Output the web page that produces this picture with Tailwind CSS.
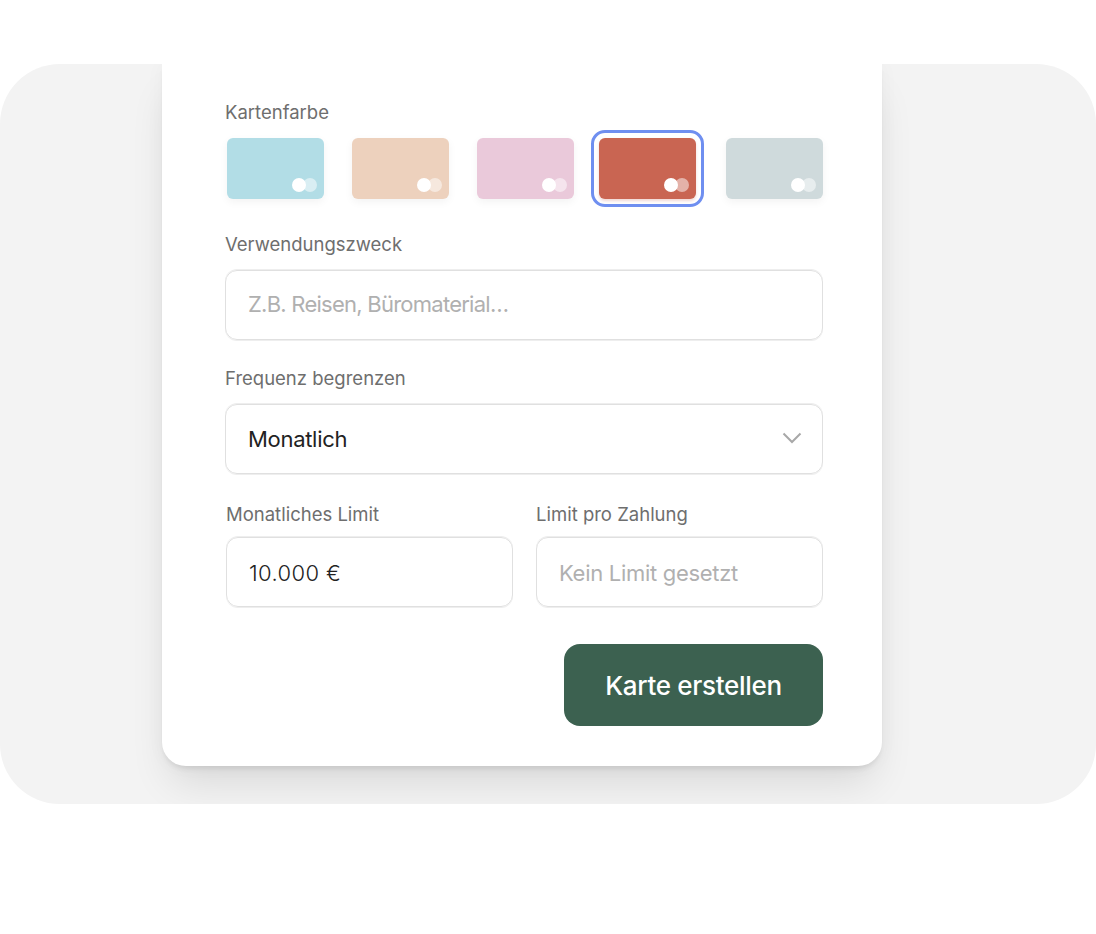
<!DOCTYPE html>
<html lang="de">

<head>
    <meta charset="UTF-8" />
    <title>Karte erstellen</title>
    <script src="https://cdn.jsdelivr.net/npm/@tailwindcss/browser@4"></script>
</head>

<body class="bg-white font-['Inter',sans-serif] h-[934px] overflow-hidden">
    <div class="pt-[64px]">
        <div class="h-[740px] bg-[#f3f3f3] rounded-[60px] overflow-hidden pl-[162px]">
            <div class="w-[720px] h-[702px] bg-white rounded-b-[24px] shadow-[0_0_20px_rgba(0,0,0,0.035),0_24px_40px_-8px_rgba(0,0,0,0.11),0_5px_5px_-2px_rgba(0,0,0,0.08)] pl-[63px] pr-[59px] pt-[36px]">

                <p class="text-[18.5px] leading-[24px] text-[#6e6e6e]">Kartenfarbe</p>
                <div class="flex mt-[14px] ml-[2px]">
                    <div class="relative w-[97px] h-[61px] rounded-[6px] bg-[#b2dde6] shadow-[0_3px_8px_rgba(0,0,0,0.05)]">
                        <span class="absolute left-[76px] top-[40px] w-[14px] h-[14px] rounded-full bg-white/50"></span>
                        <span class="absolute left-[65px] top-[40px] w-[14px] h-[14px] rounded-full bg-white"></span>
                    </div>
                    <div class="relative ml-[28px] w-[97px] h-[61px] rounded-[6px] bg-[#edd1bd] shadow-[0_3px_8px_rgba(0,0,0,0.05)]">
                        <span class="absolute left-[76px] top-[40px] w-[14px] h-[14px] rounded-full bg-white/50"></span>
                        <span class="absolute left-[65px] top-[40px] w-[14px] h-[14px] rounded-full bg-white"></span>
                    </div>
                    <div class="relative ml-[28px] w-[97px] h-[61px] rounded-[6px] bg-[#eac9da] shadow-[0_3px_8px_rgba(0,0,0,0.05)]">
                        <span class="absolute left-[76px] top-[40px] w-[14px] h-[14px] rounded-full bg-white/50"></span>
                        <span class="absolute left-[65px] top-[40px] w-[14px] h-[14px] rounded-full bg-white"></span>
                    </div>
                    <div class="relative ml-[25px] w-[97px] h-[61px] rounded-[6px] bg-[#c96552] shadow-[0_2px_3px_rgba(201,101,82,0.25)]">
                        <span class="absolute -inset-x-[8px] -inset-y-[8px] rounded-[14px] border-[3px] border-[#6f8ff0]"></span>
                        <span class="absolute left-[76px] top-[40px] w-[14px] h-[14px] rounded-full bg-white/50"></span>
                        <span class="absolute left-[65px] top-[40px] w-[14px] h-[14px] rounded-full bg-white"></span>
                    </div>
                    <div class="relative ml-[30px] w-[97px] h-[61px] rounded-[6px] bg-[#cfdadc] shadow-[0_3px_8px_rgba(0,0,0,0.05)]">
                        <span class="absolute left-[76px] top-[40px] w-[14px] h-[14px] rounded-full bg-white/50"></span>
                        <span class="absolute left-[65px] top-[40px] w-[14px] h-[14px] rounded-full bg-white"></span>
                    </div>
                </div>

                <p class="mt-[33px] text-[18.5px] leading-[24px] text-[#6e6e6e]">Verwendungszweck</p>
                <div class="mt-[14px] h-[70px] flex items-center px-[22px] pb-[1px] border border-[#e0e0e0] shadow-[0_1px_0_#eeeeee,0_-1px_0_#eeeeee] rounded-[12px] text-[22px] tracking-[-0.75px] text-[#b0b0b0]">Z.B. Reisen, Büromaterial…</div>

                <p class="mt-[26px] text-[18.5px] leading-[24px] text-[#6e6e6e]">Frequenz begrenzen</p>
                <div class="mt-[14px] h-[70px] flex items-center justify-between pl-[22px] pr-[20px] border border-[#e0e0e0] shadow-[0_1px_0_#eeeeee,0_-1px_0_#eeeeee] rounded-[12px] text-[22px] tracking-[-0.3px] text-[#222222]">
                    <span>Monatlich</span>
                    <svg class="mb-[3px]" width="20" height="12" viewBox="0 0 20 12" fill="none" stroke="#a8a8a8" stroke-width="2"><path d="M1.5 1.5 L10 10 L18.5 1.5" /></svg>
                </div>

                <div class="flex gap-[23px] mt-[28px] ml-[1px]">
                    <div class="w-[287px]">
                        <p class="text-[18.5px] leading-[24px] text-[#6e6e6e]">Monatliches Limit</p>
                        <div class="mt-[11px] h-[70px] flex items-center px-[22px] pt-[2px] border border-[#e0e0e0] shadow-[0_1px_0_#eeeeee,0_-1px_0_#eeeeee] rounded-[12px] text-[22px] font-[350] tracking-[0.4px] text-[#222222]">10.000 €</div>
                    </div>
                    <div class="w-[287px]">
                        <p class="text-[18.5px] leading-[24px] text-[#6e6e6e]">Limit pro Zahlung</p>
                        <div class="mt-[11px] h-[70px] flex items-center px-[22px] pt-[2px] border border-[#e0e0e0] shadow-[0_1px_0_#eeeeee,0_-1px_0_#eeeeee] rounded-[12px] text-[22px] tracking-[-0.3px] text-[#b0b0b0]">Kein Limit gesetzt</div>
                    </div>
                </div>

                <div class="flex justify-end mt-[37px]">
                    <div class="w-[259px] h-[82px] flex items-center justify-center rounded-[16px] bg-[#3c6150] text-white text-[26px] font-medium tracking-[-0.3px]">Karte erstellen</div>
                </div>
            </div>
        </div>
    </div>
</body>

</html>
